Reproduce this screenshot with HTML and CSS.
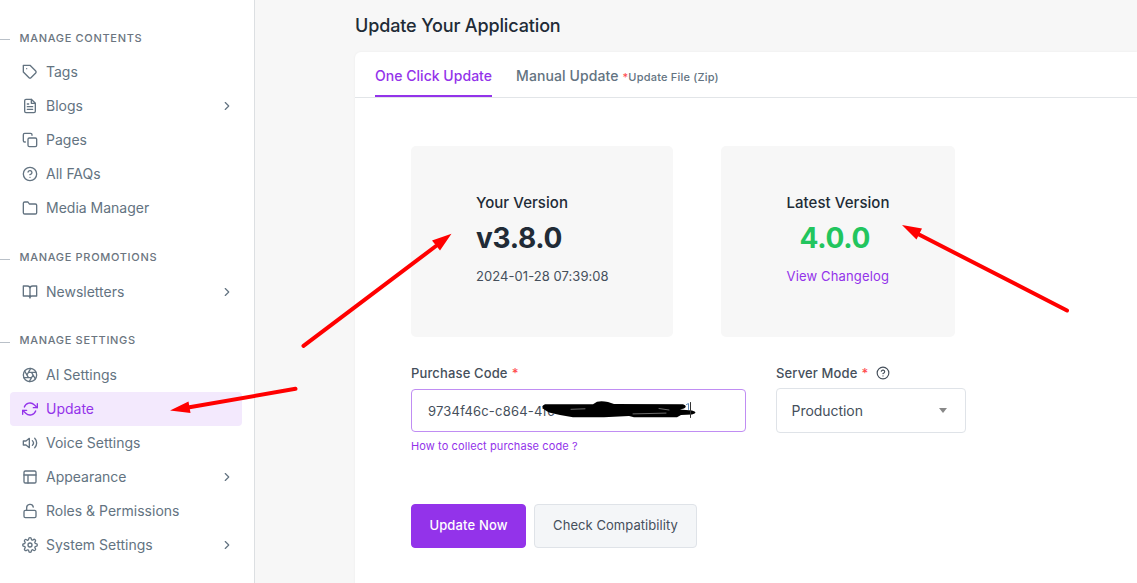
FILE: index.html
```html
<!DOCTYPE html>
<html lang="en">
<head>
<meta charset="utf-8">
<title>Update Your Application</title>
<link rel="stylesheet" href="styles.css">
</head>
<body>
<div class="app">
  <aside class="sidebar">
    <h2 class="group first"><span>MANAGE CONTENTS</span></h2>
    <nav class="menu">
      <a class="item"><svg class="icon" viewBox="0 0 24 24"><path d="M20.59 13.41l-7.17 7.17a2 2 0 0 1-2.83 0L2 12V2h10l8.59 8.59a2 2 0 0 1 0 2.82z"/><path d="M7 7h.01"/></svg><span>Tags</span></a>
      <a class="item"><svg class="icon" viewBox="0 0 24 24"><path d="M14 2H6a2 2 0 0 0-2 2v16a2 2 0 0 0 2 2h12a2 2 0 0 0 2-2V8z"/><path d="M14 2v6h6M16 13H8M16 17H8M10 9H8"/></svg><span>Blogs</span><svg class="chevron" viewBox="0 0 24 24"><path d="M9 18l6-6-6-6"/></svg></a>
      <a class="item"><svg class="icon" viewBox="0 0 24 24"><rect x="9" y="9" width="13" height="13" rx="2"/><path d="M5 15H4a2 2 0 0 1-2-2V4a2 2 0 0 1 2-2h9a2 2 0 0 1 2 2v1"/></svg><span>Pages</span></a>
      <a class="item"><svg class="icon" viewBox="0 0 24 24"><circle cx="12" cy="12" r="10"/><path d="M9.09 9a3 3 0 0 1 5.83 1c0 2-3 3-3 3M12 17h.01"/></svg><span>All FAQs</span></a>
      <a class="item"><svg class="icon" viewBox="0 0 24 24"><path d="M22 19a2 2 0 0 1-2 2H4a2 2 0 0 1-2-2V5a2 2 0 0 1 2-2h5l2 3h9a2 2 0 0 1 2 2z"/></svg><span>Media Manager</span></a>
    </nav>
    <h2 class="group"><span>MANAGE PROMOTIONS</span></h2>
    <nav class="menu">
      <a class="item"><svg class="icon" viewBox="0 0 24 24"><path d="M2 3h6a4 4 0 0 1 4 4v14a3 3 0 0 0-3-3H2zM22 3h-6a4 4 0 0 0-4 4v14a3 3 0 0 1 3-3h7z"/></svg><span>Newsletters</span><svg class="chevron" viewBox="0 0 24 24"><path d="M9 18l6-6-6-6"/></svg></a>
    </nav>
    <h2 class="group last"><span>MANAGE SETTINGS</span></h2>
    <nav class="menu">
      <a class="item"><svg class="icon" viewBox="0 0 24 24"><circle cx="12" cy="12" r="10"/><path d="M14.31 8l5.74 9.94M9.69 8h11.48M7.38 12l5.74-9.94M9.69 16L3.95 6.06M14.31 16H2.83M16.62 12l-5.74 9.94"/></svg><span>AI Settings</span></a>
      <a class="item active"><svg class="icon" viewBox="0 0 24 24"><path d="M23 4v6h-6M1 20v-6h6"/><path d="M3.51 9a9 9 0 0 1 14.85-3.36L23 10M1 14l4.64 4.36A9 9 0 0 0 20.49 15"/></svg><span>Update</span></a>
      <a class="item"><svg class="icon" viewBox="0 0 24 24"><path d="M11 5L6 9H2v6h4l5 4zM19.07 4.93a10 10 0 0 1 0 14.14M15.54 8.46a5 5 0 0 1 0 7.07"/></svg><span>Voice Settings</span></a>
      <a class="item"><svg class="icon" viewBox="0 0 24 24"><rect x="3" y="3" width="18" height="18" rx="2"/><path d="M3 9h18M9 21V9"/></svg><span>Appearance</span><svg class="chevron" viewBox="0 0 24 24"><path d="M9 18l6-6-6-6"/></svg></a>
      <a class="item"><svg class="icon" viewBox="0 0 24 24"><rect x="3" y="11" width="18" height="11" rx="2"/><path d="M7 11V7a5 5 0 0 1 9.9-1"/></svg><span>Roles &amp; Permissions</span></a>
      <a class="item"><svg class="icon" viewBox="0 0 24 24"><circle cx="12" cy="12" r="3"/><path d="M19.4 15a1.65 1.65 0 0 0 .33 1.82l.06.06a2 2 0 0 1-2.83 2.83l-.06-.06a1.65 1.65 0 0 0-2.8 1.17V21a2 2 0 0 1-4 0v-.09A1.65 1.65 0 0 0 9 19.4a1.65 1.65 0 0 0-1.82.33l-.06.06a2 2 0 0 1-2.83-2.83l.06-.06a1.65 1.65 0 0 0-1.17-2.8H3a2 2 0 0 1 0-4h.09A1.65 1.65 0 0 0 4.6 9a1.65 1.65 0 0 0-.33-1.82l-.06-.06a2 2 0 0 1 2.83-2.83l.06.06A1.65 1.65 0 0 0 9 4.68a1.65 1.65 0 0 0 1-1.51V3a2 2 0 0 1 4 0v.09a1.65 1.65 0 0 0 2.82 1.17l.06-.06a2 2 0 0 1 2.83 2.83l-.06.06A1.65 1.65 0 0 0 19.4 9a1.65 1.65 0 0 0 1.51 1H21a2 2 0 0 1 0 4h-.09a1.65 1.65 0 0 0-1.51 1z"/></svg><span>System Settings</span><svg class="chevron" viewBox="0 0 24 24"><path d="M9 18l6-6-6-6"/></svg></a>
    </nav>
  </aside>
  <main class="main">
    <h1 class="title">Update Your Application</h1>
    <section class="card">
      <div class="tabs">
        <a class="tab current">One Click Update</a>
        <a class="tab">Manual Update <small class="note"><b class="req">*</b>Update File (Zip)</small></a>
      </div>
      <div class="panel">
        <div class="versions">
          <div class="version">
            <div class="version-label">Your Version</div>
            <div class="number">v3.8.0</div>
            <div class="meta">2024-01-28 07:39:08</div>
          </div>
          <div class="version latest">
            <div class="version-label">Latest Version</div>
            <div class="number">4.0.0</div>
            <a class="meta">View Changelog</a>
          </div>
        </div>
        <div class="fields">
          <div class="field code">
            <div class="label">Purchase Code <b class="req">*</b></div>
            <div class="input">
              <span>9734f46c-c864-4fc</span>
              <svg class="redaction" width="160" height="24" viewBox="540 398 160 24"><path d="M545 404.300L593 404.300L597 401.700Q602 400.800 608 402L614 404L683 404.300Q688 406 684 408.500L680 409.500L692 410.500Q699 412.500 692 414.500L681 415L677 417.200L634 417.200L629 416L604 417.300L573 417.300L560 415L549 412.500Q538 407 545 404.300Z"/><path class="gap" d="M571 409.300l14-.5M633 413.900l33-.8M659 408.500l10 1.500"/><path class="caret" d="M690.500 402.500v15"/><path class="digit" d="M686.500 404.500l2-1v6"/></svg>
            </div>
            <a class="hint">How to collect purchase code ?</a>
          </div>
          <div class="field mode">
            <div class="label">Server Mode <b class="req">*</b><svg class="help" viewBox="0 0 24 24"><circle cx="12" cy="12" r="10"/><path d="M9.09 9a3 3 0 0 1 5.83 1c0 2-3 3-3 3M12 17h.01"/></svg></div>
            <div class="select"><span>Production</span><i class="arrow"></i></div>
          </div>
        </div>
        <div class="actions">
          <button class="btn primary">Update Now</button>
          <button class="btn">Check Compatibility</button>
        </div>
      </div>
    </section>
  </main>
</div>
<svg class="pointers" width="1137" height="583" viewBox="0 0 1137 583">
  <path class="shaft" d="M303.500 345.800L436 246M295.500 388.800L188 407.500M1067 310.500L918 234"/>
  <path class="head" d="M451.500 233.800L440 250.500L432 240.500ZM170 410.500L188.500 401.500L190.500 413ZM902 225L922 228.500L916.500 239.500Z"/>
</svg>
</body>
</html>
```
FILE: styles.css
```css
* { box-sizing: border-box; }
body {
  margin: 0;
  height: 583px;
  overflow: hidden;
  font-family: Inter, "Liberation Sans", sans-serif;
  color: #212b36;
  background: #f7f7f7;
}
svg { fill: none; stroke: currentColor; stroke-width: 2; stroke-linecap: round; stroke-linejoin: round; flex: none; }

.app { display: flex; height: 583px; }
.sidebar { width: 255px; flex: none; padding-top: 5px; background: #fff; border-right: 1px solid #dcdfe2; }
.group {
  display: flex;
  align-items: center;
  gap: 9.5px;
  height: 50px;
  margin: 0;
  padding-top: 15px;
  font-size: 11px;
  font-weight: 500;
  letter-spacing: 0.68px;
  color: #6b7580;
}
.group::before { content: ""; width: 10px; height: 1px; margin-top: 3px; background: #b9c0c8; }
.group span { padding-bottom: 2px; }
.group.first span { padding-bottom: 0; }
.group.last { height: 49px; padding-top: 14px; }
.menu { padding: 0 12px 0 10px; }
.item {
  display: flex;
  align-items: center;
  gap: 8px;
  height: 34px;
  padding: 0 8.5px 0 12px;
  border-radius: 4px;
  font-size: 14px;
  letter-spacing: 0;
  color: #637381;
}
.item span { padding-bottom: 2px; }
.icon { width: 16px; height: 16px; }
.chevron { width: 14px; height: 14px; margin-left: auto; }
.active { background: #f3e9fd; color: #9333ea; }

.main { flex: 1; min-width: 0; padding-left: 100px; }
.title { margin: 0; height: 52px; line-height: 52px; font-size: 18px; font-weight: 500; letter-spacing: -0.14px; }
.card { height: 540px; background: #fff; border-radius: 6px 0 0 0; box-shadow: 0 0 3px rgba(0, 0, 0, .05); }
.tabs { display: flex; gap: 24px; height: 46px; padding-left: 20px; border-bottom: 1px solid #e2e5e8; }
.tab { height: 45px; line-height: 48px; font-size: 14px; font-weight: 500; letter-spacing: 0.03px; color: #637381; white-space: nowrap; }
.tab + .tab { letter-spacing: 0.1px; }
.current { color: #9333ea; border-bottom: 2px solid #9333ea; }
.note { font-size: 11px; letter-spacing: 0.2px; }
.req { font-weight: 500; color: #ff4d4f; }

.panel { padding: 48px 0 0 56px; }
.versions { display: flex; gap: 48px; }
.version { width: 262px; height: 191px; padding: 45px 0 0 65px; border-radius: 5px; background: #f7f7f7; }
.latest { width: 234px; padding-left: 65.5px; }
.version-label { line-height: 24px; font-size: 15px; font-weight: 500; letter-spacing: 0.05px; }
.number { line-height: 46px; font-size: 28px; font-weight: 700; letter-spacing: -0.3px; }
.latest .number { padding-left: 13px; color: #22c55e; }
.meta { display: block; line-height: 30px; font-size: 13px; letter-spacing: 0.06px; color: #454f5b; }
.latest .meta { color: #9333ea; letter-spacing: 0.16px; }

.fields { display: flex; gap: 30px; padding-top: 26px; }
.label { display: flex; align-items: center; gap: 4px; height: 20px; font-size: 13px; font-weight: 500; letter-spacing: 0.14px; color: #454f5b; }
.help { width: 14px; height: 14px; margin-left: 4px; }
.code { width: 335px; }
.mode { width: 190px; }
.input {
  position: relative;
  display: flex;
  align-items: center;
  height: 43px;
  margin-top: 6px;
  padding-left: 16px;
  border: 1px solid #c08df3;
  border-radius: 4px;
  font-size: 13px;
  letter-spacing: 0.2px;
  color: #454f5b;
}
.redaction { position: absolute; left: 128px; top: 8px; fill: #000; stroke: none; }
.gap { stroke: #9a9a9a; stroke-width: .7; }
.caret, .digit { fill: none; stroke: #333; stroke-width: 1; }
.digit { stroke: #5c87b5; }
.hint { display: block; line-height: 28px; font-size: 11px; letter-spacing: 0.1px; color: #9333ea; }
.select {
  display: flex;
  align-items: center;
  justify-content: space-between;
  height: 45px;
  margin-top: 5px;
  padding: 0 18px 0 14.5px;
  border: 1px solid #dfe3e8;
  border-radius: 4px;
  font-size: 14px;
  letter-spacing: -0.05px;
  color: #454f5b;
}
.arrow { border: 4px solid transparent; border-top: 5px solid #888; border-bottom: 0; }

.actions { display: flex; gap: 8px; margin-top: 44px; }
.btn {
  width: 163px;
  height: 44px;
  padding: 0 0 2px;
  border: 1px solid #dfe3e8;
  border-radius: 4px;
  background: #f4f6f8;
  font: 400 13px Inter, "Liberation Sans", sans-serif;
  letter-spacing: 0.06px;
  color: #454f5b;
}
.primary { width: 115px; border-color: #9333ea; background: #9333ea; color: #fff; font-weight: 500; letter-spacing: 0.15px; }

.pointers { position: absolute; left: 0; top: 0; pointer-events: none; }
.shaft { stroke: #f00; stroke-width: 4; }
.head { fill: #f00; stroke: none; }
```
